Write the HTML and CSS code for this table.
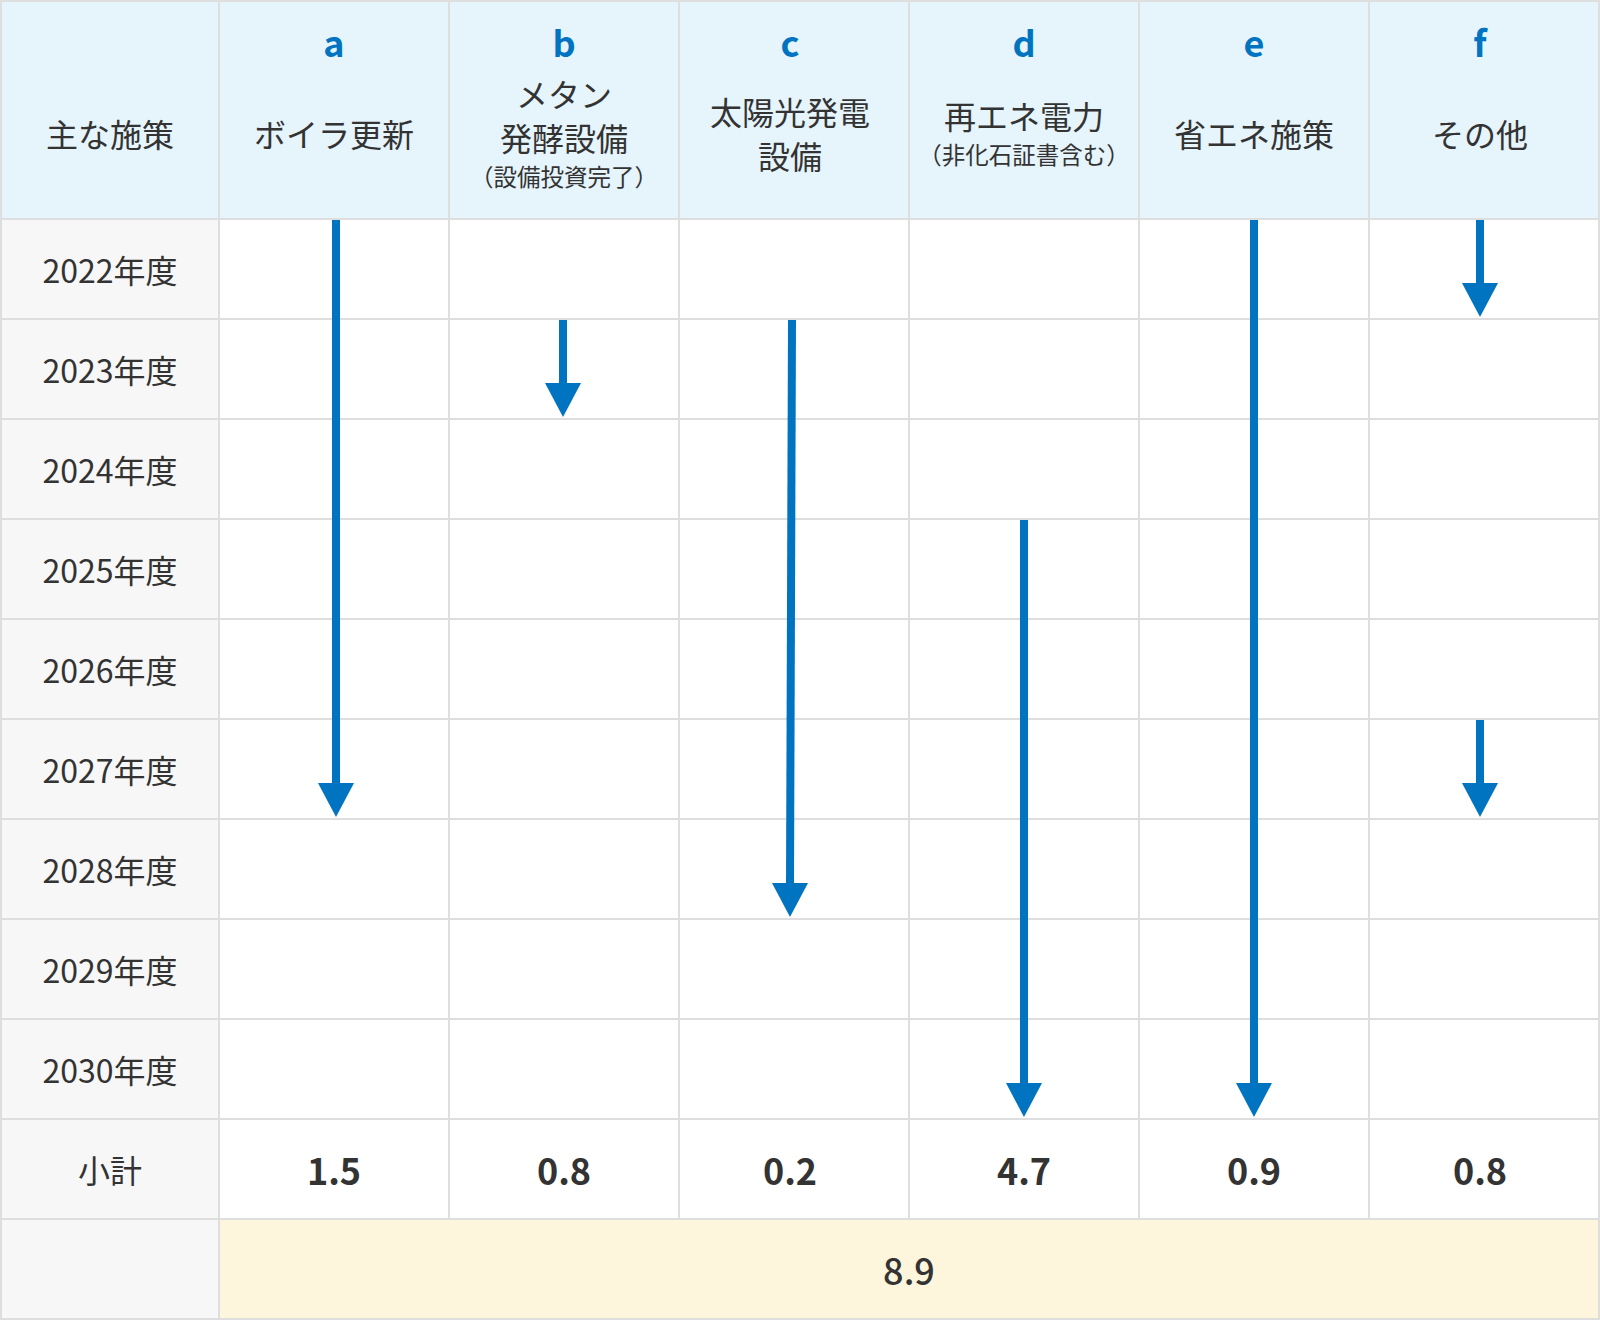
FILE: index.html
```html
<!DOCTYPE html>
<html lang="ja">
<head>
<meta charset="utf-8">
<title>施策別削減量</title>
<link rel="stylesheet" href="styles.css">
</head>
<body>
<div class="chart">
  <div class="grid">
    <div class="cell head"><span class="letter"></span><span class="label">主な施策</span></div>
    <div class="cell head"><span class="letter">a</span><span class="label">ボイラ更新</span></div>
    <div class="cell head"><span class="letter">b</span><span class="label">メタン<br>発酵設備<small>（設備投資完了）</small></span></div>
    <div class="cell head shift"><span class="letter">c</span><span class="label">太陽光発電<br>設備</span></div>
    <div class="cell head"><span class="letter">d</span><span class="label">再エネ電力<small>（非化石証書含む）</small></span></div>
    <div class="cell head"><span class="letter">e</span><span class="label">省エネ施策</span></div>
    <div class="cell head shift"><span class="letter">f</span><span class="label">その他</span></div>

    <div class="cell year">2022年度</div><div class="cell"></div><div class="cell"></div><div class="cell"></div><div class="cell"></div><div class="cell"></div><div class="cell"></div>
    <div class="cell year">2023年度</div><div class="cell"></div><div class="cell"></div><div class="cell"></div><div class="cell"></div><div class="cell"></div><div class="cell"></div>
    <div class="cell year">2024年度</div><div class="cell"></div><div class="cell"></div><div class="cell"></div><div class="cell"></div><div class="cell"></div><div class="cell"></div>
    <div class="cell year">2025年度</div><div class="cell"></div><div class="cell"></div><div class="cell"></div><div class="cell"></div><div class="cell"></div><div class="cell"></div>
    <div class="cell year">2026年度</div><div class="cell"></div><div class="cell"></div><div class="cell"></div><div class="cell"></div><div class="cell"></div><div class="cell"></div>
    <div class="cell year">2027年度</div><div class="cell"></div><div class="cell"></div><div class="cell"></div><div class="cell"></div><div class="cell"></div><div class="cell"></div>
    <div class="cell year">2028年度</div><div class="cell"></div><div class="cell"></div><div class="cell"></div><div class="cell"></div><div class="cell"></div><div class="cell"></div>
    <div class="cell year">2029年度</div><div class="cell"></div><div class="cell"></div><div class="cell"></div><div class="cell"></div><div class="cell"></div><div class="cell"></div>
    <div class="cell year">2030年度</div><div class="cell"></div><div class="cell"></div><div class="cell"></div><div class="cell"></div><div class="cell"></div><div class="cell"></div>

    <div class="cell year">小計</div>
    <div class="cell value">1.5</div>
    <div class="cell value">0.8</div>
    <div class="cell value shift">0.2</div>
    <div class="cell value">4.7</div>
    <div class="cell value">0.9</div>
    <div class="cell value shift">0.8</div>

    <div class="cell year"></div>
    <div class="cell total">8.9</div>
  </div>

  <svg class="arrows" viewBox="0 0 1600 1320" width="1600" height="1320" aria-hidden="true">
    <g fill="#0074c1">
      <!-- a: 2022 - 2027 -->
      <rect x="332" y="220" width="8" height="565"/>
      <polygon points="318,783 354,783 336,817"/>
      <!-- b: 2023 -->
      <rect x="559" y="320" width="8" height="65"/>
      <polygon points="545,383 581,383 563,417"/>
      <!-- c: 2023 - 2028 -->
      <polygon points="788,320 796,320 794,885 786,885"/>
      <polygon points="772,883 808,883 790,917"/>
      <!-- d: 2025 - 2030 -->
      <rect x="1020" y="520" width="8" height="565"/>
      <polygon points="1006,1083 1042,1083 1024,1117"/>
      <!-- e: 2022 - 2030 -->
      <rect x="1250" y="220" width="8" height="865"/>
      <polygon points="1236,1083 1272,1083 1254,1117"/>
      <!-- f: 2022 -->
      <rect x="1476" y="220" width="8" height="65"/>
      <polygon points="1462,283 1498,283 1480,317"/>
      <!-- f: 2027 -->
      <rect x="1476" y="720" width="8" height="65"/>
      <polygon points="1462,783 1498,783 1480,817"/>
    </g>
  </svg>
</div>
</body>
</html>
```

FILE: styles.css
```css
html, body {
  margin: 0;
  padding: 0;
  background: #ffffff;
}

body {
  font-family: "Noto Sans CJK JP", "Noto Sans", sans-serif;
  color: #333333;
}

.chart {
  position: relative;
  width: 1600px;
  height: 1320px;
}

.grid {
  display: grid;
  grid-template-columns: 216px repeat(6, 228px);
  grid-template-rows: 216px repeat(11, 98px);
  gap: 2px;
  padding: 2px;
  background: #dedede;
  box-sizing: border-box;
  width: 1600px;
  height: 1320px;
}

.cell {
  background: #ffffff;
  display: flex;
  align-items: center;
  justify-content: center;
  text-align: center;
}

.head {
  background: #e6f4fb;
  flex-direction: column;
  align-items: stretch;
  justify-content: flex-start;
  padding: 17px 0 15px;
}

.shift {
  padding-right: 8px;
}

.letter {
  display: block;
  height: 44px;
  line-height: 44px;
  font-size: 36px;
  font-weight: 700;
  color: #0074c1;
}

.label {
  flex: 1;
  display: flex;
  flex-direction: column;
  align-items: center;
  justify-content: center;
  font-size: 32px;
  line-height: 44px;
}

.label small {
  display: block;
  font-size: 23.5px;
  line-height: 31px;
  padding: 2px 0 4px;
}

.year {
  background: #f7f7f7;
  font-size: 32px;
  line-height: 44px;
}

.value {
  font-size: 36px;
  font-weight: 700;
  line-height: 44px;
}

.total {
  grid-column: 2 / span 6;
  background: #fdf6dc;
  font-size: 36px;
  font-weight: 500;
  line-height: 44px;
}

.arrows {
  position: absolute;
  top: 0;
  left: 0;
  pointer-events: none;
}
```
